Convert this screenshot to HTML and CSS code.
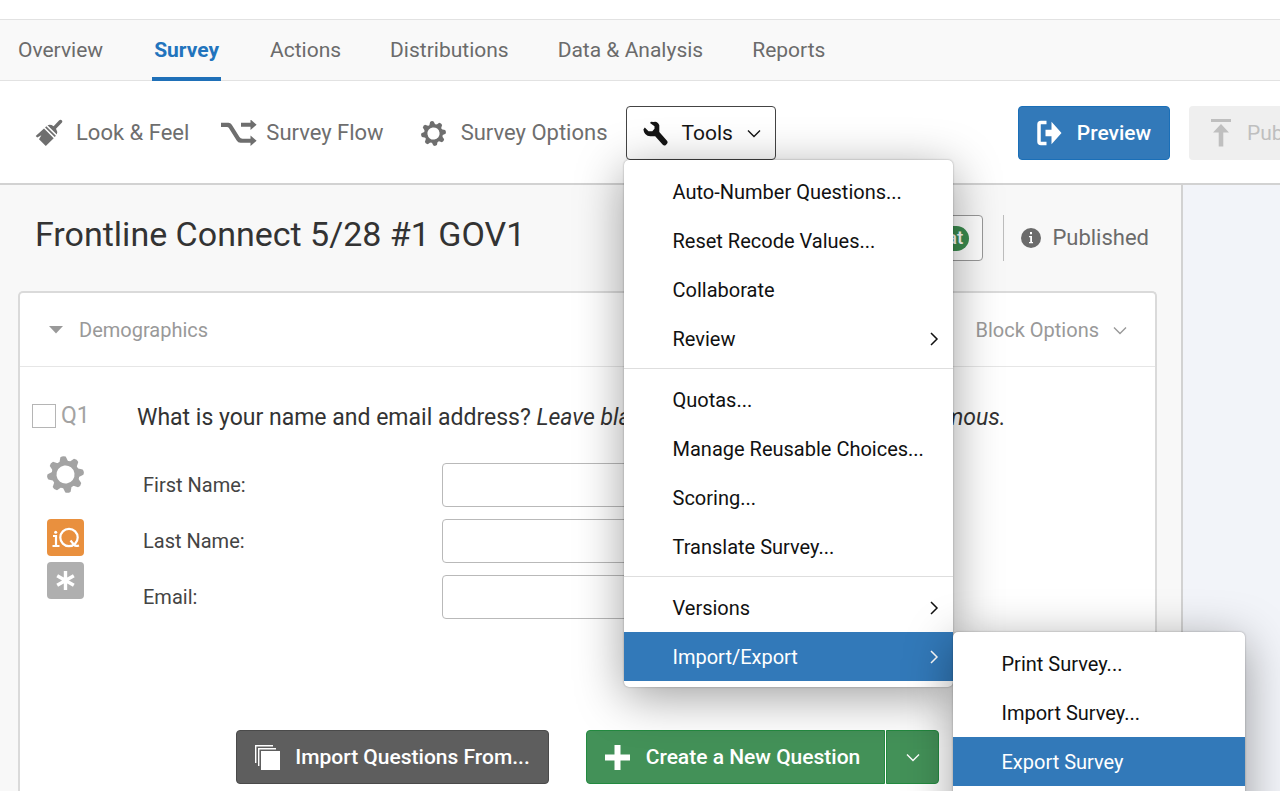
FILE: index.html
```html
<!DOCTYPE html>
<html lang="en">
<head>
<meta charset="utf-8">
<meta name="viewport" content="width=device-width, initial-scale=1">
<title>Survey editor</title>
<link rel="stylesheet" href="styles.css">
</head>
<body>
<svg class="sprite" aria-hidden="true">
  <symbol id="gear" viewBox="-18 -18 36 36">
    <g transform="rotate(-8)">
      <path fill-rule="evenodd" d="M0-13.5A13.5 13.5 0 1 0 0 13.5A13.5 13.5 0 1 0 0-13.5ZM0-8.8A8.8 8.8 0 1 1 0 8.8A8.8 8.8 0 1 1 0-8.8Z"/>
      <path id="tooth" d="M-4.4-12L-2.6-17.2Q0-18.8 2.6-17.2L4.4-12Z"/>
      <use href="#tooth" transform="rotate(45)"/>
      <use href="#tooth" transform="rotate(90)"/>
      <use href="#tooth" transform="rotate(135)"/>
      <use href="#tooth" transform="rotate(180)"/>
      <use href="#tooth" transform="rotate(225)"/>
      <use href="#tooth" transform="rotate(270)"/>
      <use href="#tooth" transform="rotate(315)"/>
    </g>
  </symbol>
  <symbol id="down" viewBox="0 0 14 14"><path d="M1 4.500L7 10.500L13 4.500" fill="none" stroke="currentColor" stroke-width="1.400"/></symbol>
  <symbol id="right" viewBox="0 0 14 14"><path d="M4 1L10 7L4 13" fill="none" stroke="currentColor" stroke-width="1.500"/></symbol>
</svg>

<nav class="tabs">
  <a class="tab" href="#">Overview</a>
  <a class="tab active" href="#" aria-current="page">Survey</a>
  <a class="tab" href="#">Actions</a>
  <a class="tab" href="#">Distributions</a>
  <a class="tab" href="#">Data &amp; Analysis</a>
  <a class="tab" href="#">Reports</a>
</nav>

<header class="toolbar">
  <button class="tool look" type="button">
    <svg width="28" height="28" viewBox="0 0 28 28"><path d="M27 1.500Q25.500.2 24 1.600L18.600 7.200Q15.500 5 12.500 6.200L21.800 15.600Q23 12.700 21 9.700L27 3.600Q27.700 2.500 27 1.500Z"/><path d="M11.300 7.200L20.900 16.800L19.700 18L10.100 8.400Z"/><path d="M9 9.400L18.700 19.200L10.800 27L8 24.200L4 20.300L6.400 16.200L2.200 18.500L.7 17Z"/></svg>
    Look &amp; Feel
  </button>
  <button class="tool flow" type="button">
    <svg width="36" height="26" viewBox="0 0 36 26"><path d="M0 2.700H7.500Q9.500 2.700 10.800 4.800L18.500 17Q19.500 18.700 21.500 18.700H29.500V15.400L35.600 20.700L29.500 26V22.700H19.500Q17 22.700 15.700 20.500L8 8.300Q7.300 7 6 7H0ZM20 2.700H29.500V-.6L35.600 4.800L29.500 10.100V6.800H20Z"/></svg>
    Survey Flow
  </button>
  <button class="tool options" type="button">
    <svg width="25" height="25"><use href="#gear"/></svg>
    Survey Options
  </button>
  <div class="tools-wrap">
    <button class="tools" type="button" aria-expanded="true">
      <svg width="25" height="25" viewBox="0 0 25 25"><path d="M10.500 1Q14.500-.3 16.300 4.300V11L24 19.700Q25.200 21.300 24 22.800L22.600 24.200Q21 25 19.800 23.800L12.200 15.300H7.300Q1 14.700.4 8.500L1.800 6.500L5.500 10.200H9.300L11.500 7.700V5.300L7 2L8 .7Z"/></svg>
      Tools
      <svg class="tools-arrow" width="14" height="14"><use href="#down"/></svg>
    </button>
    <div class="menu main-menu">
      <button class="item" type="button">Auto-Number Questions...</button>
      <button class="item" type="button">Reset Recode Values...</button>
      <button class="item" type="button">Collaborate</button>
      <button class="item" type="button">Review <svg width="14" height="14"><use href="#right"/></svg></button>
      <hr class="rule">
      <button class="item" type="button">Quotas...</button>
      <button class="item" type="button">Manage Reusable Choices...</button>
      <button class="item" type="button">Scoring...</button>
      <button class="item" type="button">Translate Survey...</button>
      <hr class="rule">
      <button class="item" type="button">Versions <svg width="14" height="14"><use href="#right"/></svg></button>
      <div class="branch">
        <button class="item selected" type="button">Import/Export <svg width="14" height="14"><use href="#right"/></svg></button>
        <div class="menu submenu">
          <button class="item" type="button">Print Survey...</button>
          <button class="item" type="button">Import Survey...</button>
          <button class="item selected" type="button">Export Survey</button>
        </div>
      </div>
    </div>
  </div>
  <button class="btn preview" type="button">
    <svg width="25" height="26" viewBox="0 0 25 26"><path d="M9.500 2.500H4Q2 2.500 2 4.500V21.500Q2 23.500 4 23.500H9.500" fill="none" stroke="#fff" stroke-width="3.500"/><path fill="#fff" d="M8.500 9.800H14.500V1.800L24.500 13L14.500 24.200V16.200H8.500Z"/></svg>
    Preview
  </button>
  <button class="btn publish" type="button" disabled>
    <svg width="20" height="28" viewBox="0 0 20 28"><path d="M0 0H20V3H0ZM10 5L18 13.500H12.300V27.500H7.700V13.500H2Z"/></svg>
    Publish
  </button>
</header>

<div class="workspace">
  <main class="editor">
    <div class="heading">
      <h1 class="title">Frontline Connect 5/28 #1 GOV1</h1>
      <div class="status">
        <button class="score" type="button"><span class="pill">Great</span></button>
        <div class="published">
          <svg width="20" height="20" viewBox="0 0 20 20"><circle cx="10" cy="10" r="10"/><path fill="#fff" d="M9 4H11V6.200H9ZM8 8H11V14H12V15.200H8V14H9.200V9.200H8Z"/></svg>
          Published
        </div>
      </div>
    </div>

    <section class="block">
      <div class="block-head">
        <button class="fold" type="button">
          <svg width="14" height="8" viewBox="0 0 14 8"><path d="M0 0H14L7 7.500Z"/></svg>
          Demographics
        </button>
        <button class="block-options" type="button">Block Options <svg width="14" height="14"><use href="#down"/></svg></button>
      </div>

      <div class="question">
        <div class="side">
          <label class="qid"><input class="check" type="checkbox">Q1</label>
          <div class="marks">
            <svg class="qgear" width="37" height="37"><use href="#gear"/></svg>
            <svg class="iq" width="37" height="37" viewBox="0 0 37 37"><g fill="none" stroke="#fff" stroke-width="2.200"><path d="M6 17H9V27M5.500 27H12.500"/><circle cx="22" cy="18.500" r="8.700"/><path d="M23.500 21.500L27 25.800Q28.500 27.700 32 26.500"/></g><circle cx="8.700" cy="13.300" r="1.500" fill="#fff"/></svg>
            <svg class="star" width="37" height="37" viewBox="0 0 37 37"><path d="M18.500 9V28M10.200 13.700L26.800 23.300M10.200 23.300L26.800 13.700" stroke="#fff" stroke-width="3.400"/></svg>
          </div>
        </div>
        <div class="body">
          <p class="prompt">What is your name and email address? <em>Leave blank if you prefer to remain anonymous.</em></p>
          <div class="fields">
            <label for="first">First Name:</label><input class="field" id="first" type="text">
            <label for="last">Last Name:</label><input class="field" id="last" type="text">
            <label for="email">Email:</label><input class="field" id="email" type="text">
          </div>
        </div>
      </div>

      <div class="actions">
        <button class="btn import" type="button">
          <svg width="25" height="25" viewBox="0 0 25 25"><path d="M.7 18V.7H18M3.700 21V3.700H21" fill="none" stroke="#fff" stroke-width="1.400"/><path fill="#fff" d="M6 6H25V25H6Z"/></svg>
          Import Questions From...
        </button>
        <div class="split">
          <button class="btn create" type="button">
            <svg width="25" height="25" viewBox="0 0 25 25"><path fill="#fff" d="M9.500 0H15.500V9.500H25V15.500H15.500V25H9.500V15.500H0V9.500H9.500Z"/></svg>
            Create a New Question
          </button>
          <button class="btn more" type="button" aria-label="More question types"><svg width="14" height="14"><use href="#down"/></svg></button>
        </div>
      </div>
    </section>
  </main>
  <aside class="gutter"></aside>
</div>
</body>
</html>
```

FILE: styles.css
```css
* { box-sizing: border-box; }

body {
  display: flex;
  flex-direction: column;
  height: 100vh;
  margin: 0;
  overflow: hidden;
  background: #fff;
  color: #333;
  font: 22px/28px Roboto, "Liberation Sans", sans-serif;
}

button {
  display: flex;
  align-items: center;
  margin: 0;
  padding: 0;
  border: 0;
  background: none;
  color: inherit;
  font: inherit;
  white-space: nowrap;
}

svg { flex: none; fill: currentColor; }
.sprite { position: absolute; width: 0; height: 0; }

.tabs {
  display: flex;
  flex: none;
  gap: 49px;
  margin-top: 19px;
  padding: 0 18px;
  border-top: 1px solid #e2e2e2;
  border-bottom: 1px solid #e2e2e2;
  background: #f9f9f9;
  font-size: 21px;
}
.tab {
  height: 60px;
  padding-top: 16px;
  color: #6b6b6b;
  text-decoration: none;
  white-space: nowrap;
}
.tab.active {
  margin-bottom: -1px;
  height: 61px;
  padding-right: 2px;
  padding-left: 2px;
  border-bottom: 4px solid #1f70b8;
  color: #2274bd;
  font-weight: 700;
}

.toolbar {
  display: flex;
  flex: none;
  align-items: center;
  height: 104px;
  padding: 2px 0 0 35px;
  border-bottom: 2px solid #d2d2d2;
}
.tool { color: #6e6e6e; }
.look { gap: 13px; margin-right: 32px; }
.flow { gap: 9px; margin-right: 37px; }
.options { gap: 15px; margin-right: 18px; }

.tools-wrap { position: relative; z-index: 2; }
.tools {
  width: 150px;
  height: 54px;
  padding: 0 17px 0 16px;
  gap: 14px;
  border: 1px solid #444;
  border-radius: 4px;
  color: #151515;
  font-size: 21px;
}
.tools-arrow { margin-left: auto; }

.menu {
  position: absolute;
  padding: 7px 0 6px;
  border-radius: 5px;
  background: #fff;
  color: #111;
  box-shadow: 0 0 2px rgba(0, 0, 0, .35), 0 10px 48px rgba(0, 0, 0, .38);
  font-size: 20px;
}
.main-menu { top: 54px; left: -2px; width: 329px; }
.submenu { top: 0; left: 329px; width: 292px; padding-bottom: 60px; }
.item {
  justify-content: space-between;
  width: 100%;
  height: 49px;
  padding: 0 12px 0 49px;
}
.item.selected { background: #3279b9; color: #fff; }
.rule {
  margin: 5px 0 6px;
  border: 0;
  border-top: 1px solid #dedede;
}
.branch { position: relative; }

.btn {
  justify-content: center;
  height: 54px;
  border-radius: 4px;
  color: #fff;
  font-size: 21px;
  font-weight: 500;
}
.preview {
  flex: none;
  width: 152px;
  gap: 15px;
  margin-left: auto;
  background: #3279b9;
  border: 1px solid #1a6fb8;
}
.publish {
  justify-content: flex-start;
  flex: none;
  width: 146px;
  gap: 16px;
  margin-right: -55px;
  margin-left: 19px;
  padding-left: 22px;
  background: #efefef;
  color: #bfbfbf;
  font-weight: 400;
}

.workspace { display: flex; flex: 1; min-height: 0; }
.editor {
  display: flex;
  flex: 1;
  flex-direction: column;
  min-width: 0;
  padding: 26px 24px 0 18px;
  border-right: 2px solid #d2d2d2;
  background: #f8f8f8;
}
.gutter { width: 97px; background: #f2f4f9; }

.heading {
  display: flex;
  justify-content: space-between;
  padding: 0 8px 0 17px;
}
.title {
  margin: 0;
  font-size: 34px;
  font-weight: 400;
  line-height: 46px;
}
.status { display: flex; margin-top: 4px; }
.score {
  height: 46px;
  padding: 0 13px;
  border: 1px solid #999;
  border-radius: 4px;
  background: #fff;
}
.pill {
  padding: 0 6px 1px;
  border-radius: 13px;
  background: #3c8d50;
  color: #fff;
  font-size: 19px;
  font-weight: 500;
  line-height: 24px;
}
.published {
  display: flex;
  align-items: center;
  gap: 11px;
  margin-left: 20px;
  padding-left: 17px;
  border-left: 1px solid #bdbdbd;
  color: #6b6b6b;
}

.block {
  flex: 1;
  margin-top: 30px;
  border: 2px solid #dadada;
  border-bottom: 0;
  border-radius: 5px 5px 0 0;
  background: #fff;
}
.block-head {
  display: flex;
  justify-content: space-between;
  height: 74px;
  padding: 0 28px 0 29px;
  border-bottom: 1px solid #e6e6e6;
  color: #999;
  font-size: 20px;
}
.fold { gap: 16px; }
.block-options { gap: 14px; }

.question { display: flex; padding-top: 35px; }
.side { width: 117px; padding-left: 12px; color: #a3a3a3; }
.qid { display: flex; align-items: center; gap: 5px; font-size: 23px; }
.check {
  width: 24px;
  height: 24px;
  margin: 0;
  border: 1px solid #b5b5b5;
  background: #fff;
  appearance: none;
}
.marks {
  display: flex;
  flex-direction: column;
  gap: 6px;
  width: 37px;
  margin: 26px 0 0 15px;
}
.qgear { margin-bottom: 20px; }
.iq { border-radius: 4px; background: #e9903e; }
.star { border-radius: 4px; background: #afafaf; }
.prompt { margin: 2px 0 31px; font-size: 23px; white-space: nowrap; }
.fields {
  display: grid;
  grid-template-columns: 299px 300px;
  row-gap: 12px;
  align-items: center;
  padding-left: 6px;
  font-size: 20px;
  color: #444;
}
.field {
  width: 100%;
  height: 44px;
  border: 1px solid #b9b9b9;
  border-radius: 4px;
  background: #fff;
  font: inherit;
}

.actions {
  display: flex;
  justify-content: center;
  gap: 37px;
  margin-top: 111px;
}
.import {
  width: 313px;
  gap: 15px;
  border: 1px solid #4a4a4a;
  background: #5e5e5e;
}
.split { display: flex; gap: 1px; }
.create {
  width: 299px;
  gap: 16px;
  padding-right: 6px;
  border: 1px solid #238a40;
  border-radius: 4px 0 0 4px;
  background: #439158;
}
.more {
  width: 53px;
  border: 1px solid #238a40;
  border-radius: 0 4px 4px 0;
  background: #439158;
}
```
